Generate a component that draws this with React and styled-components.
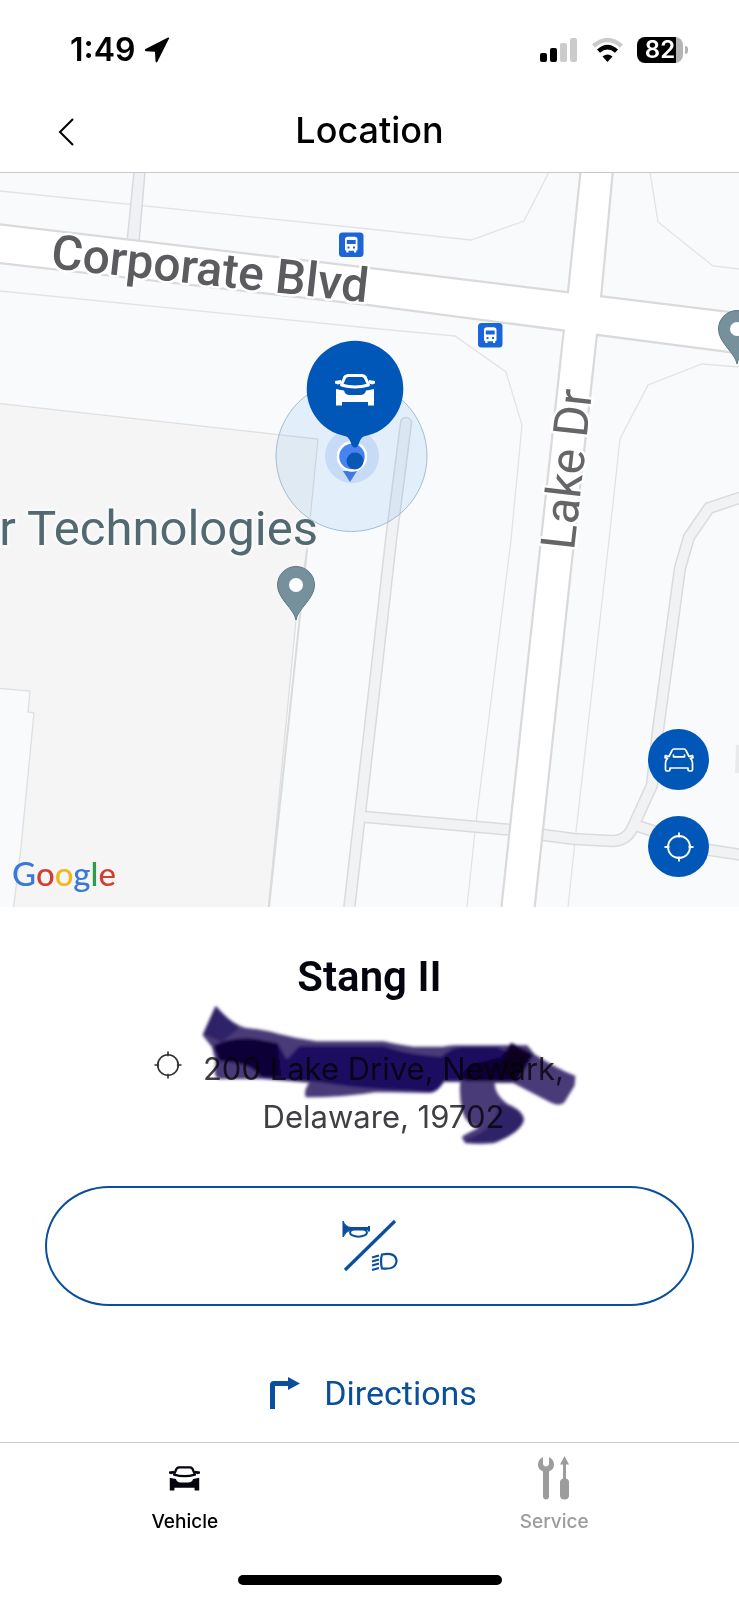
import React from 'react';
import styled, { createGlobalStyle } from 'styled-components';

const BLUE = '#0157b8';
const LINK = '#0a4f9e';

const GlobalStyle = createGlobalStyle`
  *, *::before, *::after { box-sizing: border-box; }
  body { margin: 0; background: #fff; font-family: Inter, "Liberation Sans", sans-serif; color: #000; }
  svg { display: block; }
`;

const Screen = styled.div`
  min-height: 100vh;
  display: flex;
  flex-direction: column;
  background: #fff;
`;

const StatusBar = styled.div`
  display: flex;
  align-items: center;
  justify-content: space-between;
  height: 99px;
  padding: 0 56px 0 70px;
`;

const StatusGroup = styled.div`
  display: flex;
  align-items: center;
  gap: ${(p) => p.$gap}px;
`;

const Clock = styled.span`
  font-size: 32px;
  line-height: 40px;
  font-weight: 600;
`;

const Battery = styled.div`
  position: relative;
  width: 46px;
  height: 26px;
  border-radius: 8px;
  background: linear-gradient(90deg, #000 84%, #b4b4b4 84%);
  color: #fff;
  font-size: 24px;
  line-height: 26px;
  font-weight: 600;
  text-align: center;

  &::after {
    content: '';
    position: absolute;
    left: 48px;
    top: 9px;
    width: 3px;
    height: 8px;
    border-radius: 0 3px 3px 0;
    background: #b4b4b4;
  }
`;

const Header = styled.header`
  display: grid;
  grid-template-columns: 60px 1fr 60px;
  align-items: center;
  height: 74px;
  padding: 0 36px 12px;
  border-bottom: 1px solid #c9c9cb;
`;

const BackButton = styled.button`
  display: grid;
  place-items: center;
  height: 60px;
  padding: 4px 0 0;
  border: 0;
  background: none;
`;

const Title = styled.h1`
  margin: 0;
  text-align: center;
  font-size: 36px;
  line-height: 44px;
  font-weight: 500;
`;

const MapArea = styled.section`
  position: relative;
  overflow: hidden;
  background: #f9fafc;
`;

const MapSvg = styled.svg`
  width: 100%;
  height: auto;
`;

const MapControls = styled.div`
  position: absolute;
  right: 30px;
  bottom: 30px;
  display: flex;
  flex-direction: column;
  gap: 26px;
`;

const RoundButton = styled.button`
  display: grid;
  place-items: center;
  width: 61px;
  height: 61px;
  padding: 0;
  border: 0;
  border-radius: 50%;
  background: ${BLUE};
`;

const Details = styled.main`
  flex: 1;
  display: flex;
  flex-direction: column;
  align-items: center;
  padding: 42px 45px 0;
`;

const VehicleName = styled.h2`
  margin: 0;
  color: #05050f;
  font-family: Roboto, "Open Sans", sans-serif;
  font-size: 42px;
  line-height: 56px;
  font-weight: 600;
`;

const AddressRow = styled.div`
  position: relative;
  display: flex;
  align-items: flex-start;
  justify-content: center;
  margin-top: 40px;
`;

const IconSlot = styled.span`
  flex: none;
  padding-top: 6px;
`;

const Address = styled.p`
  margin: 0;
  width: 404px;
  text-align: center;
  color: #3f3f44;
  font-size: 31px;
  line-height: 48px;
`;

const Scribble = styled.svg`
  position: absolute;
  top: -115px;
  left: 50%;
  transform: translateX(-50%);
  mix-blend-mode: multiply;
  pointer-events: none;
`;

const HornButton = styled.button`
  display: grid;
  place-items: center;
  width: 100%;
  height: 120px;
  margin-top: 45px;
  padding: 0;
  border: 2px solid ${LINK};
  border-radius: 64px / 60px;
  background: none;
`;

const DirectionsLink = styled.a`
  display: flex;
  align-items: center;
  gap: 24px;
  margin-top: 61px;
  padding-left: 8px;
  color: ${LINK};
  font-family: Roboto, "Noto Sans", sans-serif;
  font-size: 34px;
  line-height: 52px;
  font-weight: 400;
  text-decoration: none;
`;

const TabBar = styled.nav`
  display: grid;
  grid-template-columns: 1fr 1fr;
  height: 133px;
  border-top: 1px solid #c9c9cb;
`;

const Tab = styled.a`
  display: flex;
  flex-direction: column;
  align-items: center;
  gap: 10px;
  padding-top: 13px;
  color: ${(p) => (p.$active ? '#000' : '#9c9c9c')};
  font-size: 19px;
  line-height: 24px;
  font-weight: 500;
  text-decoration: none;
`;

const TabIcon = styled.span`
  display: grid;
  place-items: center;
  height: 44px;
`;

const HomeIndicator = styled.div`
  width: 264px;
  height: 10px;
  margin: 0 auto 15px;
  border-radius: 5px;
  background: #000;
`;

const Crosshair = ({ size, color }) => (
  <svg width={size} height={size} viewBox="0 0 30 30" fill="none" stroke={color} strokeWidth="1.8">
    <circle cx="15" cy="15" r="11" />
    <path d="M15 0.5V5.5M15 24.5V29.5M0.5 15H5.5M24.5 15H29.5" />
  </svg>
);

const CarOutline = () => (
  <svg width="30" height="24" viewBox="0 0 30 24" fill="none" stroke="#fff" strokeWidth="1.7" strokeLinejoin="round" strokeLinecap="round">
    <path d="M5 8.500 8 2.500Q8.600 1 10 1H20Q21.400 1 22 2.500L25 8.500 28.600 7.600 29 9.600 26.400 10.400Q28.500 12 28.500 15V21.500Q28.500 23 27 23H25.500Q24 23 24 21.500V20H6V21.500Q6 23 4.500 23H3Q1.500 23 1.500 21.500V15Q1.500 12 3.600 10.400L1 9.600 1.400 7.600Z" />
    <path d="M9.500 7V8.800H20.500V7" />
  </svg>
);

const CarSolid = ({ w, h, color, ...rest }) => (
  <svg width={w} height={h} viewBox="0 0 40 32" {...rest}>
    <path fill="none" stroke={color} strokeWidth="3" strokeLinejoin="round" d="M6.500 11 9 5Q10 1.800 13 1.600H27Q30 1.800 31 5L33.500 11Q20 15 6.500 11Z" />
    <path fill={color} d="M0 7 6 6 7 9 3 10.500 0 9.500ZM40 7 34 6 33 9 37 10.500 40 9.500Z" />
    <path fill={color} d="M1 15Q6 16 9 16.500 10 21 15 21H25Q30 21 31 16.500 34 16 39 15V31.500H33V28H7V31.500H1Z" />
  </svg>
);

const BusStop = ({ x, y }) => (
  <g transform={`translate(${x} ${y})`}>
    <rect width="24.500" height="24.500" rx="3.500" fill="#1a66d6" />
    <path fill="#fff" fillRule="evenodd" d="M6 7Q6 4.200 9 4.200H15.500Q18.500 4.200 18.500 7V17.500L17.200 18.200V20H15V18.200H9.500V20H7.300V18.200L6 17.500ZM7.800 7.500V11.500H16.700V7.500ZM8.500 14V16H10.500V14ZM14 14V16H16V14Z" />
  </g>
);

const PlacePin = ({ x, y }) => (
  <g transform={`translate(${x} ${y})`}>
    <path d="M0 35C-1.500 24-18.500 14-18.500 0A18.500 18.500 0 0 1 18.500 0C18.500 14 1.500 24 0 35Z" fill="#76919b" stroke="#5c7882" />
    <circle r="7" fill="#fff" />
  </g>
);

const driveways = [
  'M406 423 391 540 375 683 349 910',
  'M366 817 512 830',
  'M536 834 574 839 612 841Q626 841 632 829L652 785 658 730 680 568 689 537 709 508 742 497',
  'M638 826 709 850 742 855',
];

const lots = [
  'M0 191 369 229 471 240 524 221 549 172',
  'M650 172 658 222 713 266 739 269',
  'M0 291 369 328 455 336 506 372 522 425 511 540 476 822 467 907',
  'M739 367 702 364 648 385 620 439 609 540 576 832 568 907',
];

const StreetMap = () => (
  <MapSvg viewBox="0 173 739 734" role="img" aria-label="Map of vehicle location">
    <path d="M-5 403 318 439 307 550 296 620 268 912H13L21 847 34 713 28 712 30 691-5 688Z" fill="#f5f5f5" stroke="#dedfe1" strokeWidth="1.300" />
    <path d="M307 550 269 907" stroke="#dadbdd" strokeWidth="2" fill="none" />
    <path d="M736 745H739V773H735Z" fill="#e9eaec" />
    {lots.map((d) => <path key={d} d={d} fill="none" stroke="#e2e3e6" strokeWidth="1.300" />)}
    <path d="M134 172 127 242H139L145 172Z" fill="#eff1f4" stroke="#d8dadd" strokeWidth="1.500" />
    {driveways.map((d) => <path key={d} d={d} fill="none" stroke="#d9dbde" strokeWidth="12.500" strokeLinecap="round" />)}
    {driveways.map((d) => <path key={d} d={d} fill="none" stroke="#f0f2f4" strokeWidth="9.500" strokeLinecap="round" />)}
    <g fill="#fff" stroke="#dadadc" strokeWidth="4.500">
      <path d="M-5 225 369 269 745 315V353L369 304-5 261.500Z" />
      <path d="M582 168 569 293 541 550 502 912H533L572 550 600 297 612 168Z" />
    </g>
    <g fill="#fff">
      <path d="M-5 225 369 269 745 315V353L369 304-5 261.500Z" />
      <path d="M582 168 569 293 541 550 502 912H533L572 550 600 297 612 168Z" />
    </g>
    <g fontFamily="Roboto, sans-serif" paintOrder="stroke" stroke="#fff" strokeWidth="5" strokeLinejoin="round">
      <text transform="translate(50 268) rotate(6.200)" fontSize="48" fontWeight="500" fill="#5c5c60">Corporate Blvd</text>
      <text transform="translate(574 551) rotate(-83.600)" fontSize="48" fontWeight="400" fill="#666669">Lake Dr</text>
      <text x="318" y="545" textAnchor="end" fontSize="49" fill="#52696f" stroke="#f8f9fa">r Technologies</text>
    </g>
    <circle cx="351.500" cy="456" r="75.500" fill="#3f9be8" fillOpacity="0.120" stroke="#8fb0cc" strokeOpacity="0.800" />
    <circle cx="352" cy="456" r="27" fill="#4d7fe8" fillOpacity="0.180" />
    <path d="M343 471H357L350 482Z" fill="#3f78de" />
    <circle cx="352" cy="456.500" r="14" fill="#4784f2" stroke="#fff" strokeWidth="2.500" />
    <circle cx="355" cy="461" r="8.500" fill="#0b57b5" />
    <path d="M343 434Q349 437 350.500 442 352 447.500 355 447.500 358 447.500 359.500 442 361 437 367 434Z" fill={BLUE} />
    <circle cx="355" cy="389" r="48.300" fill={BLUE} />
    <CarSolid x="335" y="374" w="40" h="32" color="#fff" />
    <BusStop x="339" y="232.500" />
    <BusStop x="478" y="323" />
    <PlacePin x={296} y={585} />
    <PlacePin x={737} y={329} />
    <text x="12" y="886" fontFamily="Lato, sans-serif" fontSize="33" fontWeight="500">
      <tspan fill="#3b78d8">G</tspan><tspan fill="#d23f31">o</tspan><tspan fill="#eeb820">o</tspan><tspan fill="#3b78d8">g</tspan><tspan fill="#2f9b4f">l</tspan><tspan fill="#d23f31">e</tspan>
    </text>
  </MapSvg>
);

const MarkerScribble = () => (
  <Scribble width="480" height="230" viewBox="0 0 1440 690" aria-hidden="true">
    <defs>
      <filter id="marker-edge"><feGaussianBlur stdDeviation="4" /></filter>
    </defs>
    <g strokeLinejoin="round" strokeWidth="8" filter="url(#marker-edge)">
      <path fill="#4a3a78" stroke="#4a3a78" d="M258 233Q300 285 345 297 400 303 440 314 500 330 560 338H760Q800 348 850 354H940Q960 348 985 350H1190L1210 375Q1280 420 1332 440L1330 465 1300 515Q1285 525 1265 515L1150 455H1090Q1088 495 1130 525 1178 545 1178 570 1170 605 1090 636 1045 640 1008 636L1000 622Q1020 610 1060 592 1015 588 1002 545 990 500 995 452H940Q920 485 900 485L740 482Q640 498 530 498 525 480 545 455L400 443H270Q252 440 262 400L250 350 222 315Z" />
      <path fill="#2f2068" stroke="#2f2068" d="M258 240 320 295 275 330 225 310ZM1110 525Q1175 545 1174 572 1165 605 1090 632H1010Q1100 605 1110 525Z" />
      <path fill="#1b0c60" stroke="#1b0c60" d="M255 350Q300 320 440 342L470 395 510 352H760Q830 378 935 385 970 352 1000 355H1100L1150 380V448H940Q920 482 900 482L760 474Q660 468 560 452L400 440Q380 400 270 390Z" />
      <path fill="#100538" stroke="#100538" d="M255 350Q330 310 440 345L450 435 390 435Q370 395 270 385ZM1115 385 1145 343 1205 375 1160 450H1010Q985 425 1040 402Z" />
      <path fill="#07021c" d="M1115 400 1145 350 1200 378 1155 445Q1130 440 1100 410Z" />
    </g>
  </Scribble>
);

export default function App() {
  return (
    <Screen>
      <GlobalStyle />
      <StatusBar>
        <StatusGroup $gap={8}>
          <Clock>1:49</Clock>
          <svg width="26" height="26" viewBox="0 0 26 26" aria-label="Location in use">
            <path d="M25 1.500Q25.500 0 24 0.500L1.500 12Q0 13.500 2 14.200L11 14.800 11.500 24Q12 26.500 13.500 24.500Z" fill="#000" />
          </svg>
        </StatusGroup>
        <StatusGroup $gap={14}>
          <svg width="38" height="26" viewBox="0 0 38 26" aria-label="Signal">
            <rect x="0" y="16" width="7" height="9" rx="2" />
            <rect x="10" y="11" width="7" height="14" rx="2" />
            <rect x="20" y="6" width="7" height="19" rx="2" fill="#cbcbcb" />
            <rect x="30" y="1" width="7" height="24" rx="2" fill="#cbcbcb" />
          </svg>
          <svg width="31" height="26" viewBox="0 0 31 26" fill="none" strokeWidth="4.500" aria-label="Wi-Fi">
            <path d="M1.500 9Q15.500-3 29.500 9" stroke="#cbcbcb" />
            <path d="M6.500 14.200Q15.500 6 24.500 14.200" stroke="#000" />
            <path d="M15.500 25 10.500 19.500Q15.500 15.500 20.500 19.500Z" fill="#000" />
          </svg>
          <Battery>82</Battery>
        </StatusGroup>
      </StatusBar>

      <Header>
        <BackButton aria-label="Back">
          <svg width="18" height="28" viewBox="0 0 18 28" fill="none" stroke="#000" strokeWidth="2">
            <path d="M16 1 3 14 16 27" />
          </svg>
        </BackButton>
        <Title>Location</Title>
      </Header>

      <MapArea>
        <StreetMap />
        <MapControls>
          <RoundButton aria-label="Centre on vehicle"><CarOutline /></RoundButton>
          <RoundButton aria-label="Centre on me"><Crosshair size={30} color="#fff" /></RoundButton>
        </MapControls>
      </MapArea>

      <Details>
        <VehicleName>Stang II</VehicleName>
        <AddressRow>
          <IconSlot><Crosshair size={28} color="#333" /></IconSlot>
          <Address>200 Lake Drive, Newark,<br />Delaware, 19702</Address>
          <MarkerScribble />
        </AddressRow>
        <HornButton aria-label="Sound horn and flash lights">
          <svg width="56" height="54" viewBox="0 0 56 54" fill="none" stroke={LINK}>
            <path d="M3 51 53 2" strokeWidth="3.200" />
            <path d="M1 2Q3.500 8 9 8.500H27V11H9Q4 12 1 18Z" fill={LINK} />
            <ellipse cx="16.500" cy="13.500" rx="8.500" ry="4.200" strokeWidth="2" />
            <path d="M27 7V12.500" strokeWidth="2" />
            <path d="M40 35.500Q54 33 54.500 42 54 51 40 49.500 38 42 40 35.500Z" strokeWidth="2.200" />
            <path d="M30 38.500 37 36.500M30 42.500 37 40.500M30 46.500 37 44.500M30 51 37 49" strokeWidth="2" />
          </svg>
        </HornButton>
        <DirectionsLink href="#directions">
          <svg width="30" height="32" viewBox="0 0 30 32" aria-hidden="true">
            <path d="M0 32V8Q0 4 4 4H18V0L30 6.500 18 13V9H5V32Z" fill={LINK} />
          </svg>
          Directions
        </DirectionsLink>
      </Details>

      <TabBar>
        <Tab href="#vehicle" $active>
          <TabIcon><CarSolid w={31} h={25} color="#05050f" /></TabIcon>
          Vehicle
        </Tab>
        <Tab href="#service">
          <TabIcon>
            <svg width="32" height="44" viewBox="0 0 32 44" fill="#9c9c9c" aria-hidden="true">
              <path d="M5 1Q0 3.500 0 8.500 0 13.500 5 15.500V41Q5.500 43.500 8 43.500T11 41V15.500Q16 13.500 16 8.500 16 3.500 11 1V8Q10.500 10.500 8 10.500T5 8Z" />
              <path d="M26.500 0 31 8.500H28V22.500Q31 23.500 31 26V40Q30.500 43.500 26.500 43.500T22 40V26Q22 23.500 25 22.500V8.500H22Z" />
            </svg>
          </TabIcon>
          Service
        </Tab>
      </TabBar>
      <HomeIndicator />
    </Screen>
  );
}
